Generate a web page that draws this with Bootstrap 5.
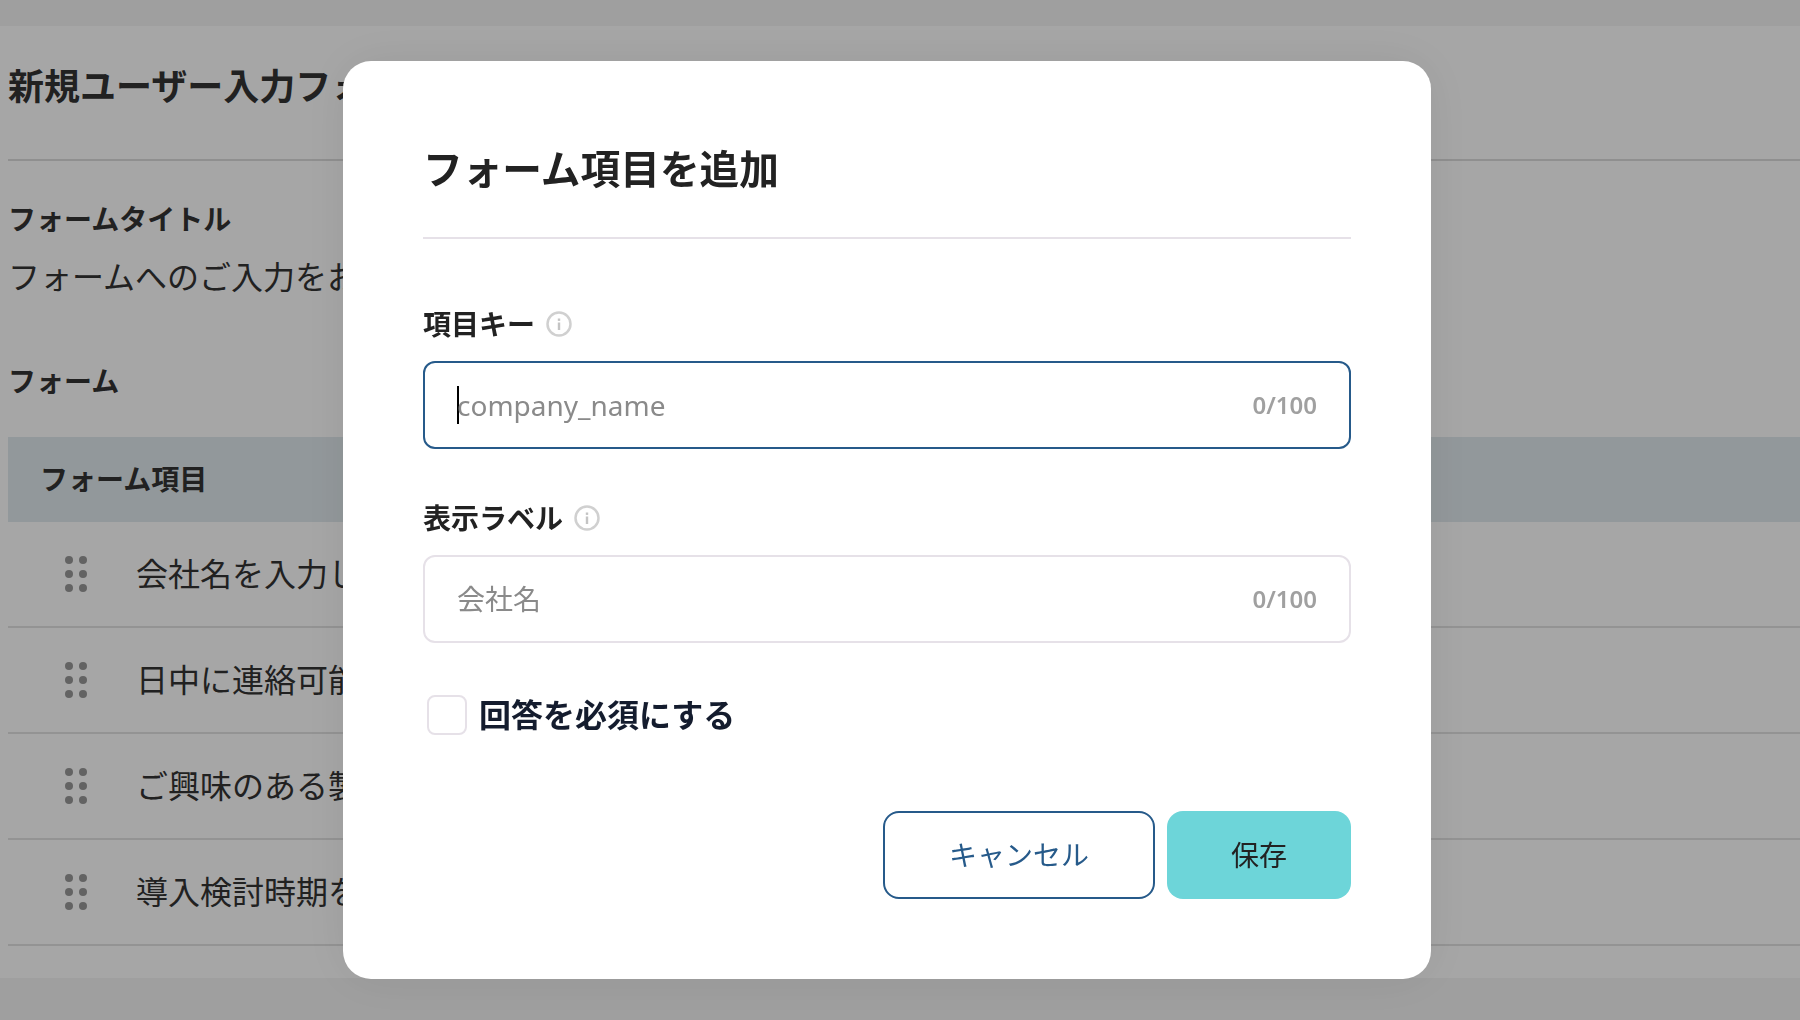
<!DOCTYPE html>
<html lang="ja">
<head>
<meta charset="utf-8">
<title>フォーム項目を追加</title>
<link href="https://cdn.jsdelivr.net/npm/bootstrap@5.3.0/dist/css/bootstrap.min.css" rel="stylesheet">
<style>
html,body{height:100%;overflow:hidden}
body{background:#f5f5f5;font-family:"Noto Sans","Noto Sans CJK JP",sans-serif;color:#333}
.page-area{margin-top:26px;height:952px;background:#fff;padding-left:8px}
.page-head{height:135px;border-bottom:2px solid #dcdcdc;font-size:36px;font-weight:700;line-height:50px;padding-top:36px;white-space:nowrap}
.sec-label{font-size:28px;font-weight:700;line-height:40px}
.title-gap{margin-top:38px}
.form-gap{margin-top:61px}
.sec-text{font-size:32px;line-height:46px;margin-top:15px}
.items-head{height:85px;background:#e1eaee;padding-left:32px;padding-bottom:1px;font-size:28px;font-weight:700;margin-top:36px}
.item-row{height:106px;border-bottom:2px solid #e2e2e2;padding-left:57px;font-size:32px;gap:49px}
.grip{width:22px;height:36px;fill:#999}
.overlay{position:fixed;inset:0;background:rgba(0,0,0,.35);z-index:1050}
.dialog-box{position:absolute;left:343px;top:61px;width:1088px;height:918px;background:#fff;border-radius:28px;padding:0 80px;box-shadow:0 0 50px rgba(0,0,0,.08)}
.dialog-title{height:178px;padding-top:81px;border-bottom:2px solid #e6e1e8;font-size:39.7px;font-weight:700;line-height:54px;color:#222;margin:0}
.field-label{font-size:28px;font-weight:700;color:#222;line-height:40px;height:40px;gap:11px;margin-bottom:17px}
.key-label{margin-top:65px}
.disp-label{margin-top:49px}
.info-ic{width:26px;height:26px}
.field-box{height:88px;border:2px solid #e6e1e8;border-radius:12px;padding:0 32px}
.field-box.on{border-color:#265a8a}
.field-box .form-control{border:0;padding:0;box-shadow:none;background:transparent;font-size:28px;color:#222;border-radius:0}
.field-box .form-control::placeholder{color:#8a8a8a}
.caret-bar{width:2px;height:38px;background:#000;flex:none;margin-right:-2px}
.count-txt{font-size:24px;font-weight:600;color:#a0a0a0;flex:none}
.req-check{margin-top:52px;gap:14px;height:40px;padding-left:4px}
.req-check .form-check-input{width:40px;height:40px;margin:0;border:2px solid #e6e1e8;border-radius:8px;flex:none}
.req-check label{font-size:32px;font-weight:700;color:#141c2e;margin-left:-2px}
.dialog-actions{margin-top:76px;gap:12px}
.btn-cancel,.btn-save{height:88px;border-radius:16px;font-size:28px;padding:0;display:flex;align-items:center;justify-content:center}
.btn-cancel{width:272px;border:2px solid #265a8a;color:#265a8a;background:#fff}
.btn-save{width:184px;border:0;background:#6dd5d9;color:#222}
</style>
</head>
<body>
<main class="page-area">
  <div class="page-head">新規ユーザー入力フォーム</div>
  <div class="sec-label title-gap">フォームタイトル</div>
  <div class="sec-text">フォームへのご入力をお願いします</div>
  <div class="sec-label form-gap">フォーム</div>
  <div class="items-head d-flex align-items-center">フォーム項目</div>
  <div class="item-row d-flex align-items-center"><svg class="grip" viewBox="0 0 22 36"><circle cx="4" cy="4" r="4"/><circle cx="18" cy="4" r="4"/><circle cx="4" cy="18" r="4"/><circle cx="18" cy="18" r="4"/><circle cx="4" cy="32" r="4"/><circle cx="18" cy="32" r="4"/></svg><span>会社名を入力してください</span></div>
  <div class="item-row d-flex align-items-center"><svg class="grip" viewBox="0 0 22 36"><circle cx="4" cy="4" r="4"/><circle cx="18" cy="4" r="4"/><circle cx="4" cy="18" r="4"/><circle cx="18" cy="18" r="4"/><circle cx="4" cy="32" r="4"/><circle cx="18" cy="32" r="4"/></svg><span>日中に連絡可能な電話番号</span></div>
  <div class="item-row d-flex align-items-center"><svg class="grip" viewBox="0 0 22 36"><circle cx="4" cy="4" r="4"/><circle cx="18" cy="4" r="4"/><circle cx="4" cy="18" r="4"/><circle cx="18" cy="18" r="4"/><circle cx="4" cy="32" r="4"/><circle cx="18" cy="32" r="4"/></svg><span>ご興味のある製品</span></div>
  <div class="item-row d-flex align-items-center"><svg class="grip" viewBox="0 0 22 36"><circle cx="4" cy="4" r="4"/><circle cx="18" cy="4" r="4"/><circle cx="4" cy="18" r="4"/><circle cx="18" cy="18" r="4"/><circle cx="4" cy="32" r="4"/><circle cx="18" cy="32" r="4"/></svg><span>導入検討時期を選択</span></div>
</main>

<div class="overlay">
  <div class="dialog-box" role="dialog">
    <h2 class="dialog-title">フォーム項目を追加</h2>
    <div class="field-label key-label d-flex align-items-center">項目キー
      <svg class="info-ic" viewBox="0 0 26 26"><circle cx="13" cy="13" r="11.5" fill="none" stroke="#d0d0d0" stroke-width="2.5"/><rect x="11.8" y="11.5" width="2.4" height="7.5" fill="#c4c4c4"/><rect x="11.8" y="7.5" width="2.4" height="2.4" fill="#c4c4c4"/></svg>
    </div>
    <div class="field-box on d-flex align-items-center">
      <span class="caret-bar"></span>
      <input class="form-control flex-grow-1" type="text" placeholder="company_name">
      <span class="count-txt">0/100</span>
    </div>
    <div class="field-label disp-label d-flex align-items-center">表示ラベル
      <svg class="info-ic" viewBox="0 0 26 26"><circle cx="13" cy="13" r="11.5" fill="none" stroke="#d0d0d0" stroke-width="2.5"/><rect x="11.8" y="11.5" width="2.4" height="7.5" fill="#c4c4c4"/><rect x="11.8" y="7.5" width="2.4" height="2.4" fill="#c4c4c4"/></svg>
    </div>
    <div class="field-box d-flex align-items-center">
      <input class="form-control flex-grow-1" type="text" placeholder="会社名">
      <span class="count-txt">0/100</span>
    </div>
    <div class="req-check d-flex align-items-center">
      <input class="form-check-input" type="checkbox" id="reqc">
      <label for="reqc">回答を必須にする</label>
    </div>
    <div class="dialog-actions d-flex justify-content-end">
      <button type="button" class="btn btn-cancel">キャンセル</button>
      <button type="button" class="btn btn-save">保存</button>
    </div>
  </div>
</div>
<script src="https://cdn.jsdelivr.net/npm/bootstrap@5.3.0/dist/js/bootstrap.bundle.min.js"></script>
</body>
</html>
